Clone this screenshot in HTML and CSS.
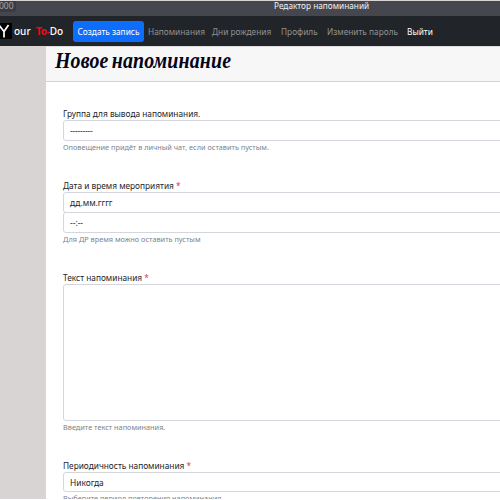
FILE: index.html
```
<!DOCTYPE html>
<html lang="ru">
<head>
<meta charset="utf-8">
<title>Редактор напоминаний</title>
<link rel="stylesheet" href="styles.css">
</head>
<body>
<div class="window">
  <header class="titlebar"><span class="address">000</span><span class="window-title">Редактор напоминаний</span></header>
  <nav class="navbar">
    <svg class="logo" viewBox="0 0 12 16"><path class="logo-bg" d="M0 0h12v16H0z"/><path class="logo-mark" d="M-1 2 4 8.5 8.5 2M4 8.5V14.5"/></svg>
    <span class="brand"><span class="our">our</span><span class="todo"><span class="red">To-</span>Do</span></span>
    <a class="create"><span>Создать запись</span></a>
    <a class="link reminders">Напоминания</a>
    <a class="link birthdays">Дни рождения</a>
    <a class="link profile">Профиль</a>
    <a class="link password">Изменить пароль</a>
    <a class="link logout">Выйти</a>
  </nav>
  <main class="card">
    <div class="card-header"><h1>Новое напоминание</h1></div>
    <form class="form">
      <section class="group g1">
        <label>Группа для вывода напоминания.</label>
        <div class="field dashes">---------</div>
        <small>Оповещение придёт в личный чат, если оставить пустым.</small>
      </section>
      <section class="group g2">
        <label>Дата и время мероприятия <span class="req">*</span></label>
        <div class="field date">дд.мм.гггг</div>
        <div class="field time">--:--</div>
        <small>Для ДР время можно оставить пустым</small>
      </section>
      <section class="group g3">
        <label>Текст напоминания <span class="req">*</span></label>
        <div class="field area"></div>
        <small>Введите текст напоминания.</small>
      </section>
      <section class="group g4">
        <label>Периодичность напоминания <span class="req">*</span></label>
        <div class="field period">Никогда</div>
        <small>Выберите период повторения напоминания.</small>
      </section>
    </form>
  </main>
</div>
</body>
</html>
```
FILE: styles.css
```
* { box-sizing: border-box; }
body { margin: 0; background: #fff; font-family: "Noto Sans", "Open Sans", sans-serif; font-size: 8px; color: #212529; }
.window { height: 499px; padding-top: 1px; overflow: hidden; background: #d8d4d3; white-space: nowrap; }
.titlebar { height: 15px; background: #46464f; color: #f2f2f2; display: flex; line-height: 10px; }
.address { width: 16px; height: 11px; background: #3b3b43; color: #a5a5ab; border-radius: 0 0 3px 0; text-indent: -1px; font-size: 8.5px; }
.window-title { margin-left: 258px; font-size: 8.25px; }
.navbar { height: 30px; background: #212529; display: flex; align-items: center; }
.logo { width: 12px; height: 16px; flex: none; }
.logo-bg { fill: #000; }
.logo-mark { fill: none; stroke: #fff; stroke-width: 1.7; }
.brand { width: 61px; padding-left: 2px; display: flex; color: #fff; font-size: 10px; font-weight: 500; flex: none; }
.our { width: 22px; }
.red { color: #f00a12; font-weight: 700; letter-spacing: -.3px; }
.create { width: 71px; height: 21px; flex: none; border-radius: 3px; background: #0d6efd; color: #fff; display: flex; align-items: center; justify-content: center; font-size: 8.3px; }
.link { color: #909294; font-size: 8.3px; flex: none; }
.reminders { margin-left: 4px; width: 64px; }
.birthdays { width: 69px; }
.profile { width: 46px; }
.password { width: 80px; }
.logout { color: #fff; }
.card { margin-left: 46px; height: 453px; background: #fff; }
.card-header { height: 36px; background: #f7f7f7; border-top: 1px solid #dedede; border-bottom: 1px solid #d3d3d3; padding-left: 9px; }
h1 { margin: 0; font: italic bold 23px/28px "Liberation Serif", serif; word-spacing: -2px; letter-spacing: .15px; color: #050519; transform: scaleX(.865); transform-origin: left; }
.form { padding: 26px 0 0 17px; }
.group { height: 72px; }
.g2 { height: 92px; }
.g3 { height: 188px; }
label { display: block; height: 12px; line-height: 12px; font-size: 8.3px; }
.req { color: #dc3545; }
.field { width: 460px; height: 21px; border: 1px solid #d4d6dd; border-radius: 3px; padding-left: 6px; line-height: 19px; font-size: 8.4px; }
.dashes { letter-spacing: -.2px; }
.time { margin-top: -1px; }
.area { height: 137px; }
.period { height: 20px; }
small { display: block; line-height: 13px; font-size: 7.32px; color: #7c838a; }
```
